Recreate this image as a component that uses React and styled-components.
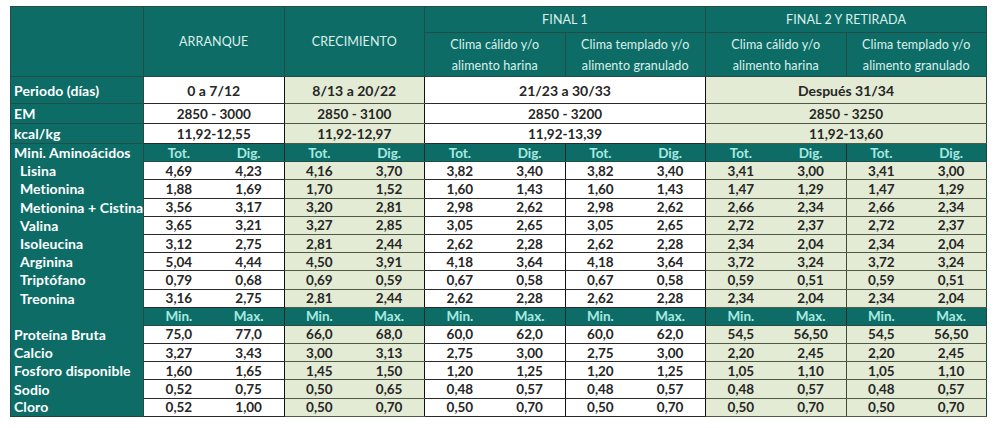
import React from "react";
import styled, { createGlobalStyle } from "styled-components";

const GlobalStyle = createGlobalStyle`
  html, body {
    margin: 0;
    padding: 0;
    background: #ffffff;
  }
  body {
    font-family: "Lato", "Open Sans", sans-serif;
  }
`;

const Page = styled.div`
  width: 1000px;
  height: 428px;
  padding: 6px 0 0 10px;
  box-sizing: border-box;
  background: #ffffff;
`;

const Table = styled.table`
  border-collapse: collapse;
  table-layout: fixed;
  width: 977px;
  font-family: "Lato", "Open Sans", sans-serif;
  border: 1.5px solid #20433f;
`;

const HeadCell = styled.th`
  background: #0d6d66;
  color: #dcf0ec;
  font-weight: 400;
  font-size: 12.5px;
  line-height: 21px;
  text-align: center;
  vertical-align: middle;
  padding: 0 2px;
  border: 1px solid #234b47;
  letter-spacing: 0.1px;
`;

const Label = styled.th`
  background: #0d6d66;
  color: #ffffff;
  font-weight: 700;
  font-size: 14px;
  letter-spacing: 0.1px;
  text-align: left;
  white-space: nowrap;
  overflow: visible;
  padding: 0 0 0 ${p => (p.$indent ? "9px" : "3px")};
  border-left: 1px solid #234b47;
  border-right: 1px solid #234b47;
  border-bottom: ${p => (p.$line ? "1px solid #1f4f4a" : "none")};
  border-top: ${p => (p.$line ? "1px solid #1f4f4a" : "none")};
`;

const SubHead = styled.td`
  background: #0d6d66;
  color: #a9e9e1;
  font-weight: 700;
  font-size: 13.5px;
  text-align: center;
  padding: 0;
  border-left: ${p => (p.$start ? "1.5px solid #1d2b29" : "none")};
  border-top: 1px solid #1f4f4a;
  border-bottom: 1px solid #1f4f4a;
`;

const Cell = styled.td`
  background: ${p => (p.$green ? "#e3ebd4" : "#ffffff")};
  color: #262626;
  font-weight: 700;
  font-size: ${p => (p.$big ? "14px" : "13.5px")};
  text-align: center;
  padding: 0;
  white-space: nowrap;
  border-top: 1px solid ${p => (p.$green ? "#4e5a48" : "#2a2a2a")};
  border-bottom: 1px solid ${p => (p.$green ? "#4e5a48" : "#2a2a2a")};
  border-left: ${p =>
    p.$start ? `1.5px solid ${p.$soft ? "#3f4a3b" : "#111"}` : "none"};
`;

const Row = styled.tr`
  height: ${p => p.$h}px;
`;

const groups = [
  { green: false },
  { green: true },
  { green: false },
  { green: false },
  { green: true },
  { green: true }
];

const amino = [
  ["Lisina", ["4,69", "4,23"], ["4,16", "3,70"], ["3,82", "3,40"], ["3,82", "3,40"], ["3,41", "3,00"], ["3,41", "3,00"]],
  ["Metionina", ["1,88", "1,69"], ["1,70", "1,52"], ["1,60", "1,43"], ["1,60", "1,43"], ["1,47", "1,29"], ["1,47", "1,29"]],
  ["Metionina + Cistina", ["3,56", "3,17"], ["3,20", "2,81"], ["2,98", "2,62"], ["2,98", "2,62"], ["2,66", "2,34"], ["2,66", "2,34"]],
  ["Valina", ["3,65", "3,21"], ["3,27", "2,85"], ["3,05", "2,65"], ["3,05", "2,65"], ["2,72", "2,37"], ["2,72", "2,37"]],
  ["Isoleucina", ["3,12", "2,75"], ["2,81", "2,44"], ["2,62", "2,28"], ["2,62", "2,28"], ["2,34", "2,04"], ["2,34", "2,04"]],
  ["Arginina", ["5,04", "4,44"], ["4,50", "3,91"], ["4,18", "3,64"], ["4,18", "3,64"], ["3,72", "3,24"], ["3,72", "3,24"]],
  ["Triptófano", ["0,79", "0,68"], ["0,69", "0,59"], ["0,67", "0,58"], ["0,67", "0,58"], ["0,59", "0,51"], ["0,59", "0,51"]],
  ["Treonina", ["3,16", "2,75"], ["2,81", "2,44"], ["2,62", "2,28"], ["2,62", "2,28"], ["2,34", "2,04"], ["2,34", "2,04"]]
];

const minerals = [
  ["Proteína Bruta", ["75,0", "77,0"], ["66,0", "68,0"], ["60,0", "62,0"], ["60,0", "62,0"], ["54,5", "56,50"], ["54,5", "56,50"]],
  ["Calcio", ["3,27", "3,43"], ["3,00", "3,13"], ["2,75", "3,00"], ["2,75", "3,00"], ["2,20", "2,45"], ["2,20", "2,45"]],
  ["Fosforo disponible", ["1,60", "1,65"], ["1,45", "1,50"], ["1,20", "1,25"], ["1,20", "1,25"], ["1,05", "1,10"], ["1,05", "1,10"]],
  ["Sodio", ["0,52", "0,75"], ["0,50", "0,65"], ["0,48", "0,57"], ["0,48", "0,57"], ["0,48", "0,57"], ["0,48", "0,57"]],
  ["Cloro", ["0,52", "1,00"], ["0,50", "0,70"], ["0,50", "0,70"], ["0,50", "0,70"], ["0,50", "0,70"], ["0,50", "0,70"]]
];

const SubHeadRow = ({ label, a, b }) => (
  <Row $h={18.2}>
    <Label>{label}</Label>
    {groups.map((g, i) => (
      <React.Fragment key={i}>
        <SubHead $start>{a}</SubHead>
        <SubHead>{b}</SubHead>
      </React.Fragment>
    ))}
  </Row>
);

const DataRow = ({ row, indent }) => (
  <Row $h={18.2}>
    <Label $indent={indent}>{row[0]}</Label>
    {row.slice(1).map((pair, i) => (
      <React.Fragment key={i}>
        <Cell $green={groups[i].green} $start $soft={i === 5}>
          {pair[0]}
        </Cell>
        <Cell $green={groups[i].green}>{pair[1]}</Cell>
      </React.Fragment>
    ))}
  </Row>
);

const SpanRow = ({ label, values, h, big }) => (
  <Row $h={h}>
    <Label $line>{label}</Label>
    <Cell $start $big={big} colSpan={2}>{values[0]}</Cell>
    <Cell $start $big={big} $green colSpan={2}>{values[1]}</Cell>
    <Cell $start $big={big} colSpan={4}>{values[2]}</Cell>
    <Cell $start $big={big} $green colSpan={4}>{values[3]}</Cell>
  </Row>
);

export default function App() {
  const cols = Array.from({ length: 12 });
  return (
    <Page>
      <GlobalStyle />
      <Table>
        <colgroup>
          <col style={{ width: "133px" }} />
          {cols.map((_, i) => (
            <col key={i} />
          ))}
        </colgroup>
        <tbody>
          <Row $h={26}>
            <HeadCell rowSpan={2} />
            <HeadCell rowSpan={2} colSpan={2}>ARRANQUE</HeadCell>
            <HeadCell rowSpan={2} colSpan={2}>CRECIMIENTO</HeadCell>
            <HeadCell colSpan={4}>FINAL 1</HeadCell>
            <HeadCell colSpan={4}>FINAL 2 Y RETIRADA</HeadCell>
          </Row>
          <Row $h={44}>
            <HeadCell colSpan={2}>Clima cálido y/o<br />alimento harina</HeadCell>
            <HeadCell colSpan={2}>Clima templado y/o<br />alimento granulado</HeadCell>
            <HeadCell colSpan={2}>Clima cálido y/o<br />alimento harina</HeadCell>
            <HeadCell colSpan={2}>Clima templado y/o<br />alimento granulado</HeadCell>
          </Row>
          <SpanRow
            label="Periodo (días)"
            h={27}
            big
            values={["0 a 7/12", "8/13 a 20/22", "21/23 a 30/33", "Después 31/34"]}
          />
          <SpanRow
            label="EM"
            h={20}
            values={["2850 - 3000", "2850 - 3100", "2850 - 3200", "2850 - 3250"]}
          />
          <SpanRow
            label="kcal/kg"
            h={20}
            values={["11,92-12,55", "11,92-12,97", "11,92-13,39", "11,92-13,60"]}
          />
          <SubHeadRow label="Mini. Aminoácidos" a="Tot." b="Dig." />
          {amino.map(r => (
            <DataRow key={r[0]} row={r} indent />
          ))}
          <SubHeadRow label="" a="Min." b="Max." />
          {minerals.map(r => (
            <DataRow key={r[0]} row={r} />
          ))}
        </tbody>
      </Table>
    </Page>
  );
}
